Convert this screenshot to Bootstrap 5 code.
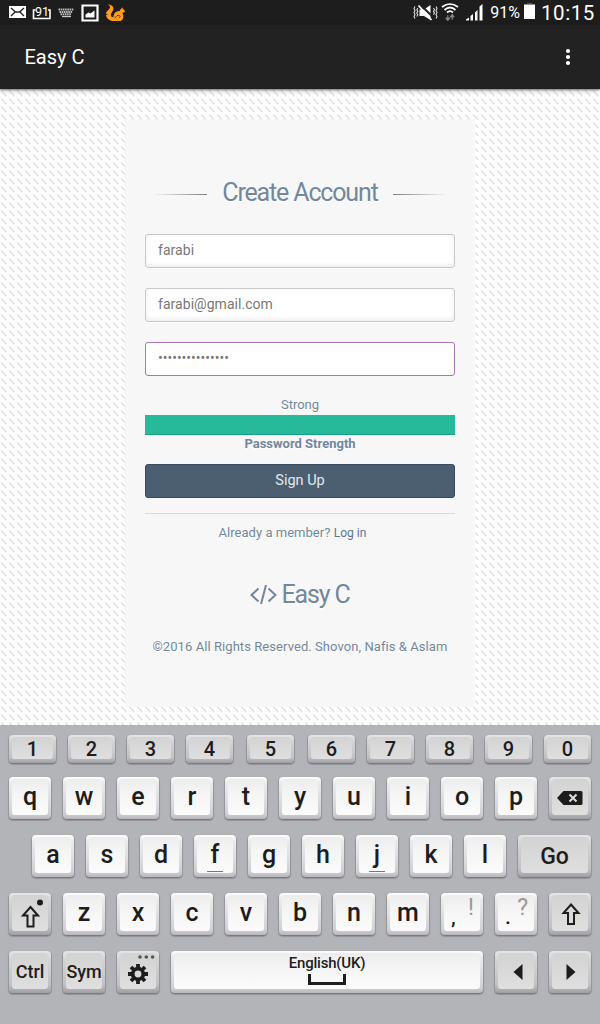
<!DOCTYPE html>
<html lang="en">
<head>
<meta charset="utf-8">
<meta name="viewport" content="width=device-width, initial-scale=1">
<title>Easy C</title>
<link href="https://cdn.jsdelivr.net/npm/bootstrap@5.3.0/dist/css/bootstrap.min.css" rel="stylesheet">
<style>
body{font-family:Roboto,"Liberation Sans",sans-serif;width:600px;height:1024px;overflow:hidden;color:#73879c;font-size:13px;line-height:1.5}
svg{display:block;flex:none}
.statusbar{height:25px;background:#1d1d1d;color:#fff;padding:0 5px 0 9px}
.statusbar .pct{font-size:16px;line-height:25px;margin-left:6px}
.statusbar .clock{font-size:20.5px;line-height:24px;letter-spacing:.6px;margin-left:6px}
.appbar{height:64px;background:#222;color:#fff;padding:0 28px 0 24.500px;position:relative;z-index:1;box-shadow:0 1px 2px rgba(0,0,0,.5),0 2px 6px rgba(0,0,0,.15)}
.appbar h1{font-size:20px;font-weight:400}
.page{height:636px;padding-top:30px;background:#fff url("data:image/svg+xml,%3Csvg xmlns='http://www.w3.org/2000/svg' width='8' height='8'%3E%3Cpath d='M1 1.500L6.500 7' stroke='%23e0e0e0' stroke-width='1.400'/%3E%3C/svg%3E") 0 0}
.panel{width:350px;height:588px;background:#f7f7f7;padding:55px 20px 0;text-shadow:0 1px 0 #fff}
.heading{height:36px;margin-bottom:24px;padding-top:2px}
.heading h2,.brand{font-size:25px;font-weight:400;letter-spacing:-1.150px;line-height:36px}
.rule{height:1px;width:55px;margin-top:3px}
.rule-l{margin-left:7px;background:linear-gradient(to left,#7e7e7e,#f7f7f7)}
.rule-r{margin-right:7px;background:linear-gradient(to right,#7e7e7e,#f7f7f7)}
.panel .form-control{height:34px;font-size:14px;letter-spacing:.04px;color:#777;border:1px solid #c8c8c8;border-radius:3px;padding:4px 12px 6px;margin-bottom:20px;box-shadow:0 1px 0 #fff,inset 0 -2px 5px rgba(0,0,0,.08);line-height:20px}
.panel .form-control.active{border-color:#aa77b3;box-shadow:none;margin-bottom:19px;letter-spacing:0}
.meter{height:20px;border-radius:0;background:#26b99a}
.meter .progress-bar{background:#26b99a;border-bottom:1px solid #169f85}
.panel .btn{height:34px;background:#4b5f71;border:1px solid #364b5f;border-radius:3px;color:#e4e9ec;font-size:14.500px;padding:0;line-height:30px;text-shadow:none;margin-bottom:15px}
.strength-label{line-height:18px;margin-bottom:11px}
.divider{height:1px;background:#d8d8d8}
.panel a{color:#5a738e;font-size:12px}
.already{padding:9px 15px 0 0;height:63px;letter-spacing:.03px}
.brand{gap:3px}
.legal{padding-top:24px;letter-spacing:.07px}
.keyboard{height:299px;background:#b3b4b8;padding:10px 9px 0;color:#1d1d1d}
.keyrow{gap:12px;margin-bottom:16px}
.keyrow.digits{margin-bottom:14px}
.cap{width:42px;height:42px;flex:none;padding:2px 3px 4px 3px;border-radius:4px;background:linear-gradient(#fff,#ebebed 14%,#dcdbdf 60%,#cfced2 88%,#b9b7bc);box-shadow:0 1px 1px #77777c,0 1px 1px 1px rgba(90,90,95,.3);position:relative}
.cap>span{display:flex;align-items:center;justify-content:center;width:100%;height:100%;border-radius:3px;background:linear-gradient(#ededed,#f5f5f5 40%,#fbfbfb);font-size:25px;font-weight:500;line-height:25px;white-space:nowrap;padding:0 0 2px}
.cap.fn{background:linear-gradient(#e6e6e8,#d4d4d7 20%,#c2c1c5 80%,#a19fa4)}
.cap.fn>span{background:linear-gradient(#d3d3d3,#dfdfdf);padding-bottom:0}
.digits .cap{width:47px;height:28px}
.digits .cap>span{font-size:20px;line-height:20px;padding-top:1px}
.shifted{margin-left:2px}
.cap .homebar{position:absolute;left:13px;bottom:5px;width:16px;height:1px;background:#777}
.cap .alt{position:absolute;right:9px;top:3px;font-size:23px;line-height:24px;color:#999}
.cap>.punct{justify-content:flex-start;padding:8px 0 0 7px;font-size:21px}
.cap.fn>.word{font-size:18px;letter-spacing:-.1px;font-weight:500}
.cap.space{width:312px}
.cap.space>span{flex-direction:column;justify-content:flex-start;font-size:15px;line-height:18px;letter-spacing:-.2px;padding-top:1px}
.space svg{margin-top:2px}
.cap .mark-over{position:absolute;right:4px;top:4px}
.cap.go{width:73px}
.cap.go>span{font-size:23px;padding-top:2px}
</style>
</head>
<body>
<header>
<div class="statusbar d-flex align-items-center">
 <svg width="116" height="25" viewBox="0 0 116 25">
  <path fill="#fff" d="M0 6h17v12H0z"/><path d="M2 8l4.500 4h4L15 8M2 16l4-4m5 0l4 4" fill="none" stroke="#222" stroke-width="1.400"/>
  <path d="M26.500 10h-2v8.500h16.500V10h-2" fill="none" stroke="#fff" stroke-width="1.600"/>
  <text x="26" y="15.800" font-family="Roboto" font-size="12.500" fill="#fff">91</text>
  <path d="M49.500 9.500h15M50.500 12h13M51.500 14.300h11" stroke="#bbb" stroke-width="1.900" stroke-dasharray="1.600 .6"/><path d="M53 16.500h9" stroke="#ccc" stroke-width="1.300"/>
  <path d="M73.500 5.500h15v15h-15z" fill="none" stroke="#fff" stroke-width="2.200"/><path d="M76.500 17.500v-3l3-2 2 1 4-3v7z" fill="#fff"/>
  <path fill="#ff9d19" d="M98.500 4.500c4.500 0 7 2.500 5.500 6-1 2-2.500 3-2 5 .3 1.500 1.500 2 2.500 1.500 0-4 2.500-6 6.500-6 0-1.500.5-2 1.500-2.500l.7-1.300.6 1.600c1 .7 1 1.200 2.200 2.200 0 1-.5 1.500-2.500 1.600-.2 1 .8 2 .8 4 0 2-.8 4.500-3.800 4.500h-6c-4 0-7-2.500-7.500-6l2-.7-2-.8c.3-2.800 3.500-3.500 4-6 .2-1.500-.6-2.500-2.500-3.100z"/>
  <path d="M105.500 18.300c1.500-.5 1.500-3 4-3 2 0 2 2.300.3 2.300" fill="none" stroke="#222" stroke-width=".8"/>
 </svg>
 <svg class="ms-auto" width="71" height="25" viewBox="0 0 71 25">
  <g stroke="#ddd" fill="none" stroke-width="1.100"><path d="M2 6.500l-1 2 1 2-1 2 1 2-1 2 1 2M4.800 8l-1 1.700 1 1.700-1 1.700 1 1.700-1 1.700M23 6.500l1 2-1 2 1 2-1 2 1 2-1 2M20.500 8l1 1.700-1 1.700 1 1.700-1 1.700"/></g>
  <path d="M6.500 9.500h4.500L17.500 5v15L11 16H6.500z" fill="#fff"/><path d="M7 4.500l13 12.500" stroke="#222" stroke-width="2"/><path d="M5.500 5.500L18.500 20" stroke="#fff" stroke-width="1.800"/>
  <g fill="none" stroke="#fff" stroke-width="1.700"><path d="M29 7q8-6 16 0M31.500 10q5.500-5 11 0M34 12.500q3-2.600 6 0"/></g>
  <path d="M34.800 15v5M39.200 20v-5M32.800 18h4l-2 2.800zM37.200 17h4l-2-2.800z" stroke="#888" stroke-width="1" fill="#888"/>
  <path fill="#fff" d="M53 20.500v-1l3-2v3zM57.500 20.500v-4.500l2.500-2v6.500zM62 20.500v-8l2.500-2.500v10.500zM66.500 20.500V6.500l3-2.500v16.500z"/>
 </svg>
 <span class="pct">91%</span>
 <svg style="margin-left:4px" width="11" height="25"><path fill="#fff" d="M0 4.500h11V19H0z"/><path fill="#888" d="M3 3.500h5v1H3z"/></svg>
 <span class="clock">10:15</span>
</div>
<nav class="appbar d-flex align-items-center justify-content-between">
 <h1 class="m-0">Easy C</h1>
 <svg width="8" height="20" viewBox="0 0 8 20" fill="#fff"><circle cx="4" cy="4" r="2.100"/><circle cx="4" cy="10" r="2.100"/><circle cx="4" cy="16" r="2.100"/></svg>
</nav>
</header>
<main class="page">
<section class="panel mx-auto text-center">
 <div class="heading d-flex align-items-center justify-content-between"><i class="rule rule-l"></i><h2 class="m-0">Create Account</h2><i class="rule rule-r"></i></div>
 <form>
  <input class="form-control" type="text" value="farabi" aria-label="Username">
  <input class="form-control" type="text" value="farabi@gmail.com" aria-label="Email">
  <input class="form-control active" type="password" value="passwordstrong1" aria-label="Password">
  <div>Strong</div>
  <div class="progress meter"><div class="progress-bar w-100"></div></div>
  <div class="strength-label fw-bold">Password Strength</div>
  <button class="btn w-100 d-block" type="button">Sign Up</button>
 </form>
 <div class="divider"></div>
 <p class="already m-0">Already a member? <a class="text-decoration-none" href="#">Log in</a></p>
 <div class="brand d-flex justify-content-center align-items-center"><svg width="28" height="24" viewBox="0 0 28 24" fill="none" stroke="#73879c" stroke-width="2"><path d="M8.500 5.500L1.500 12l7 6.500M18.500 5.500l7 6.500-7 6.500M16 2l-5 19"/></svg><span>Easy C</span></div>
 <p class="legal m-0">©2016 All Rights Reserved. Shovon, Nafis &amp; Aslam</p>
</section>
</main>
<section class="keyboard">
 <div class="keyrow digits d-flex">
  <div class="cap fn"><span>1</span></div><div class="cap fn"><span>2</span></div><div class="cap fn"><span>3</span></div><div class="cap fn"><span>4</span></div><div class="cap fn shifted"><span>5</span></div><div class="cap fn shifted"><span>6</span></div><div class="cap fn"><span>7</span></div><div class="cap fn"><span>8</span></div><div class="cap fn"><span>9</span></div><div class="cap fn"><span>0</span></div>
 </div>
 <div class="keyrow d-flex">
  <div class="cap"><span>q</span></div><div class="cap"><span>w</span></div><div class="cap"><span>e</span></div><div class="cap"><span>r</span></div><div class="cap"><span>t</span></div><div class="cap"><span>y</span></div><div class="cap"><span>u</span></div><div class="cap"><span>i</span></div><div class="cap"><span>o</span></div><div class="cap"><span>p</span></div>
  <div class="cap fn"><span><svg width="26" height="14" viewBox="0 0 26 14" style="margin-top:2px"><path d="M0 7l6.500-7H24q1.500 0 1.500 1.500v11q0 1.500-1.500 1.500H6.500z" fill="#1d1d1d"/><path d="M12.500 3.500l7 7m0-7l-7 7" stroke="#ddd" stroke-width="2"/></svg></span></div>
 </div>
 <div class="keyrow d-flex justify-content-end">
  <div class="cap"><span>a</span></div><div class="cap"><span>s</span></div><div class="cap"><span>d</span></div><div class="cap"><span>f</span><i class="homebar"></i></div><div class="cap"><span>g</span></div><div class="cap"><span>h</span></div><div class="cap"><span>j</span><i class="homebar"></i></div><div class="cap"><span>k</span></div><div class="cap"><span>l</span></div><div class="cap fn go"><span>Go</span></div>
 </div>
 <div class="keyrow d-flex">
  <div class="cap fn"><span><svg width="34" height="34" viewBox="0 0 34 34"><path d="M17.500 11l7.500 8.500h-4.500v11h-6v-11H10z" fill="none" stroke="#1d1d1d" stroke-width="2"/><circle cx="27" cy="6.500" r="3" fill="#1d1d1d"/></svg></span></div>
  <div class="cap"><span>z</span></div><div class="cap"><span>x</span></div><div class="cap"><span>c</span></div><div class="cap"><span>v</span></div><div class="cap"><span>b</span></div><div class="cap"><span>n</span></div><div class="cap"><span>m</span></div>
  <div class="cap"><span class="punct">,</span><i class="alt fst-normal">!</i></div><div class="cap"><span class="punct">.</span><i class="alt fst-normal">?</i></div>
  <div class="cap fn"><span><svg width="20" height="24" viewBox="0 0 20 24" style="margin:1px 0 0 2px"><path d="M10 2.500l7.500 8.500H13v11H7V11H2.500z" fill="none" stroke="#1d1d1d" stroke-width="2"/></svg></span></div>
 </div>
 <div class="keyrow d-flex">
  <div class="cap fn"><span class="word">Ctrl</span></div><div class="cap fn"><span class="word">Sym</span></div>
  <div class="cap fn"><span><svg width="22" height="22" viewBox="-11 -11 22 22" style="margin-top:5px"><g stroke="#1d1d1d" stroke-width="3.800"><path d="M0-10V-5M0 5V10M-10 0H-5M5 0H10M-7-7L-4-4M4 4L7 7M-7 7L-4 4M4-4L7-7"/><circle r="5.300" fill="none"/></g></svg></span><svg class="mark-over" width="17" height="4" fill="#555"><circle cx="2" cy="2" r="1.800"/><circle cx="8.300" cy="2" r="1.800"/><circle cx="14.600" cy="2" r="1.800"/></svg></div>
  <div class="cap space"><span>English(UK)<svg width="38" height="11"><path d="M1.500 0v9.500h35V0" fill="none" stroke="#1d1d1d" stroke-width="3"/></svg></span></div>
  <div class="cap fn"><span><svg width="10" height="16" style="margin:2px 0 0 3px"><path d="M9.500 0v16L.5 8z" fill="#1d1d1d"/></svg></span></div>
  <div class="cap fn"><span><svg width="10" height="16" style="margin:2px 0 0 2px"><path d="M.5 0v16l9-8z" fill="#1d1d1d"/></svg></span></div>
 </div>
</section>
<script src="https://cdn.jsdelivr.net/npm/bootstrap@5.3.0/dist/js/bootstrap.bundle.min.js"></script>
</body>
</html>
